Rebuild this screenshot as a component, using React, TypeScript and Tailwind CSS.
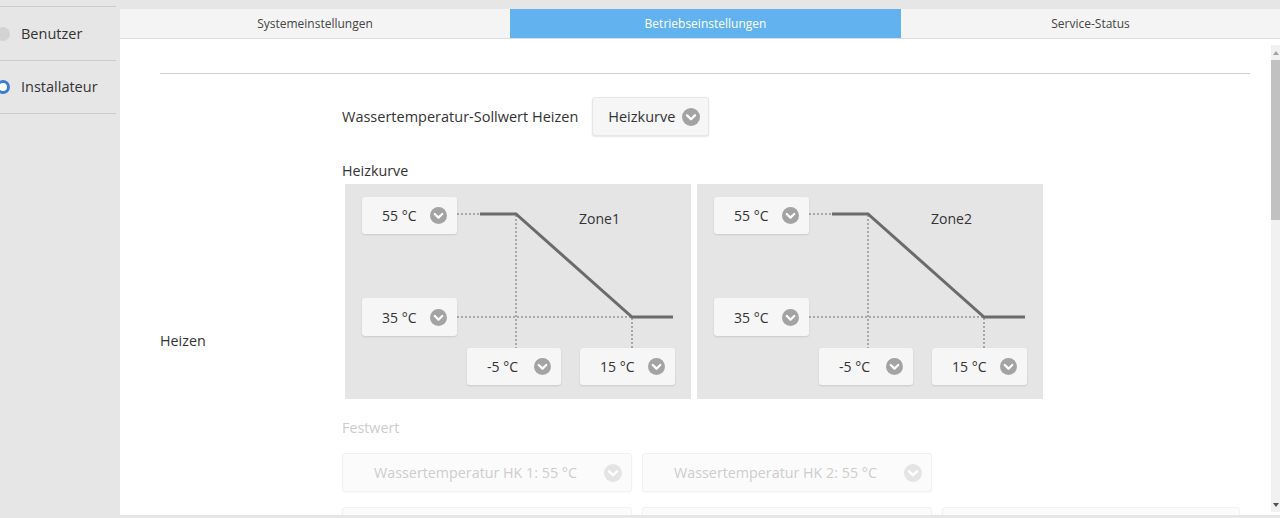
import React from 'react';

const font = "font-['Open_Sans',sans-serif]";

function ChevronCircle({ size = 17, color = '#a3a3a3' }: { size?: number; color?: string }) {
  return (
    <svg width={size} height={size} viewBox="0 0 20 20" className="shrink-0">
      <circle cx="10" cy="10" r="10" fill={color} />
      <path
        d="M5.6 8.2l4.4 4.3 4.4-4.3"
        fill="none"
        stroke="white"
        strokeWidth="2.7"
        strokeLinecap="round"
        strokeLinejoin="round"
      />
    </svg>
  );
}

interface ValueBoxProps {
  value: string;
  className: string;
}

// kleine Auswahlbox im Diagramm
function ValueBox({ value, className }: ValueBoxProps) {
  return (
    <div
      className={`absolute flex items-center justify-between rounded-[3px] bg-[#f6f6f6] pl-[20px] pr-[10px] text-[14px] text-[#333] shadow-[0_1px_2px_rgba(0,0,0,0.12)] ${className}`}
    >
      <span>{value}</span>
      <ChevronCircle size={17} />
    </div>
  );
}

function CurvePanel({ zone }: { zone: string }) {
  return (
    <div className="relative h-[215px] w-[346px] bg-[#e5e5e5]">
      <svg className="absolute inset-0" width="346" height="215" viewBox="0 0 346 215">
        <g stroke="#a8a8a8" strokeWidth="2" strokeDasharray="2 2" fill="none">
          <line x1="112" y1="30" x2="135" y2="30" />
          <line x1="171" y1="31" x2="171" y2="164" />
          <line x1="112" y1="133" x2="287" y2="133" />
          <line x1="287" y1="134" x2="287" y2="164" />
        </g>
        <polyline
          points="135,30 171,30 287,133 328,133"
          fill="none"
          stroke="#6b6b6b"
          strokeWidth="3"
          strokeLinejoin="miter"
        />
      </svg>
      <span className="absolute left-[234px] top-[25px] text-[14px] leading-5 text-[#333]">{zone}</span>
      <ValueBox value="55 °C" className="left-[17px] top-[13px] h-[37px] w-[95px]" />
      <ValueBox value="35 °C" className="left-[17px] top-[114px] h-[38px] w-[95px]" />
      <ValueBox value="-5 °C" className="left-[122px] top-[164px] h-[37px] w-[94px]" />
      <ValueBox value="15 °C" className="left-[235px] top-[164px] h-[37px] w-[95px]" />
    </div>
  );
}

function DisabledSelect({ label, width }: { label?: string; width: string }) {
  return (
    <div
      className={`flex h-[39px] items-center rounded-[3px] border border-[#f1f1f1] bg-[#fbfbfb] pr-[9px] text-[14.3px] text-[#cdcdcd] shadow-[0_1px_2px_rgba(0,0,0,0.03)] ${width}`}
    >
      <span className="flex-1 pl-[4px] text-center">{label}</span>
      {label && <ChevronCircle size={18} color="#e4e4e4" />}
    </div>
  );
}

export default function App() {
  return (
    <div className={`flex h-[518px] w-[1280px] overflow-hidden bg-[#e6e6e6] ${font}`}>
      {/* Seitenleiste */}
      <aside className="w-[120px] shrink-0 pt-[6px]">
        <div className="w-[116px] border-t border-[#cdcdcd]">
          <div className="flex h-[54px] items-center gap-[11px] border-b border-[#cdcdcd]">
            <span className="-ml-[4px] h-[14px] w-[14px] rounded-full bg-[#d3d3d3]" />
            <span className="text-[14.5px] text-[#333]">Benutzer</span>
          </div>
          <div className="flex h-[53px] items-center gap-[11px] border-b border-[#cdcdcd]">
            <span className="-ml-[4px] h-[14px] w-[14px] rounded-full border-[3px] border-[#3b7dd6] bg-white" />
            <span className="text-[14.5px] text-[#333]">Installateur</span>
          </div>
        </div>
      </aside>

      <div className="flex min-w-0 flex-1 flex-col pt-[9px] pb-[3px]">
        {/* Tabs */}
        <div className="flex h-[30px] shrink-0 border-b border-[#dddddd] bg-[#f4f4f4] text-[12px] text-[#444]">
          <div className="flex w-[390px] items-center justify-center">Systemeinstellungen</div>
          <div className="flex w-[391px] items-center justify-center bg-[#62b2ef] text-white">
            Betriebseinstellungen
          </div>
          <div className="flex flex-1 items-center justify-center">Service-Status</div>
        </div>

        <div className="flex min-h-0 flex-1 bg-white">
          <div className="min-w-0 flex-1 overflow-hidden pl-[40px] pr-[21px] pt-[34px]">
            <div className="border-t border-[#cfcfcf]">
              <div className="flex">
                <div className="w-[182px] shrink-0 pt-[257px] text-[14.3px] leading-5 text-[#333]">Heizen</div>

                <div className="pt-[23px]">
                  <div className="flex items-center gap-[14px]">
                    <span className="text-[14.5px] leading-5 text-[#333]">Wassertemperatur-Sollwert Heizen</span>
                    <div className="flex h-[39px] w-[117px] items-center justify-between rounded-[3px] border border-[#e6e6e6] bg-[#f6f6f6] pl-[15px] pr-[8px] text-[14.5px] text-[#333] shadow-[0_1px_2px_rgba(0,0,0,0.1)]">
                      <span>Heizkurve</span>
                      <ChevronCircle size={18} />
                    </div>
                  </div>

                  <div className="mt-[25px] text-[14.3px] leading-5 text-[#333]">Heizkurve</div>
                  <div className="ml-[3px] mt-[3px] flex gap-[6px]">
                    <CurvePanel zone="Zone1" />
                    <CurvePanel zone="Zone2" />
                  </div>

                  <div className="mt-[19px] text-[14.3px] leading-5 text-[#cccccc]">Festwert</div>
                  <div className="mt-[15px] flex gap-[10px]">
                    <DisabledSelect label="Wassertemperatur HK 1: 55 °C" width="w-[290px]" />
                    <DisabledSelect label="Wassertemperatur HK 2: 55 °C" width="w-[290px]" />
                  </div>
                  <div className="mt-[15px] flex gap-[10px]">
                    <DisabledSelect width="w-[290px]" />
                    <DisabledSelect width="w-[290px]" />
                    <DisabledSelect width="w-[298px]" />
                  </div>
                </div>
              </div>
            </div>
          </div>

          {/* Scrollbar */}
          <div className="mb-[3px] mt-[6px] flex w-[9px] shrink-0 flex-col bg-[#f1f1f1]">
            <div className="flex h-[15px] items-center justify-center">
              <span className="h-0 w-0 border-x-[3px] border-b-[4px] border-x-transparent border-b-[#a3a3a3]" />
            </div>
            <div className="h-[160px] bg-[#c1c1c1]" />
            <div className="flex-1" />
            <div className="flex h-[15px] items-center justify-center">
              <span className="h-0 w-0 border-x-[3px] border-t-[4px] border-x-transparent border-t-[#505050]" />
            </div>
          </div>
        </div>
      </div>
    </div>
  );
}
